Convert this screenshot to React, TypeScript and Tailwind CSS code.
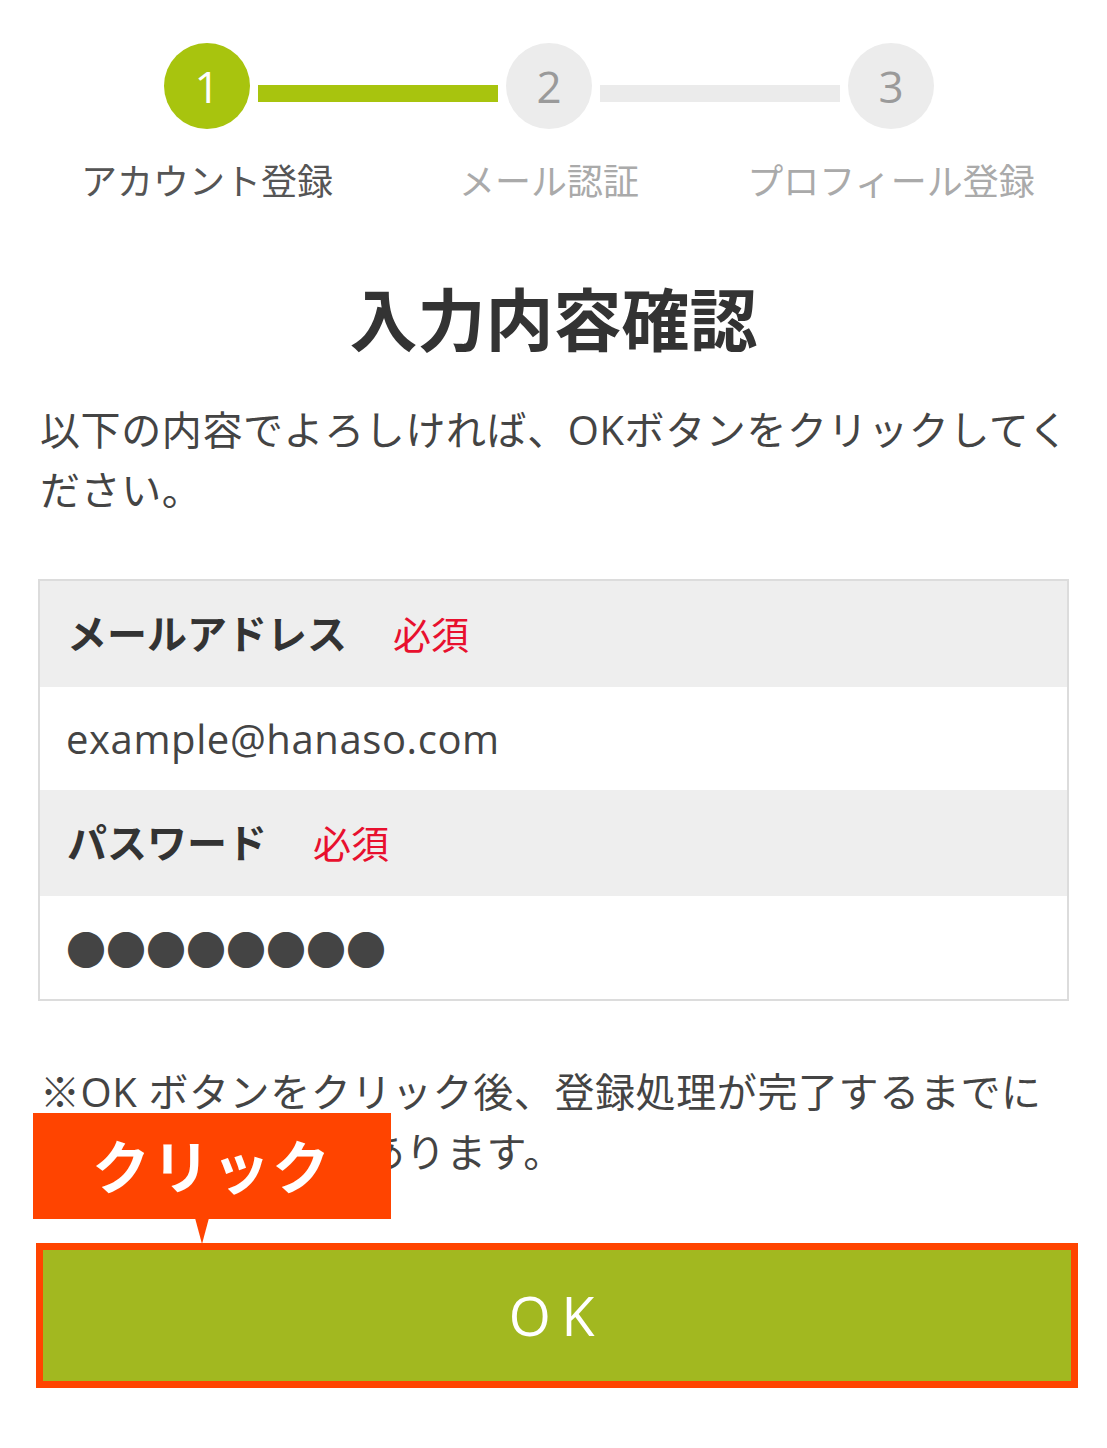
const jp = "font-['Open_Sans','Noto_Sans_CJK_JP',sans-serif]";

function Step({ n, active }: { n: number; active?: boolean }) {
  return (
    <div
      className={
        "flex h-[86px] w-[86px] shrink-0 items-center justify-center rounded-full text-[44px] leading-none " +
        (active ? "bg-[#a8c40e] text-white" : "bg-[#ececec] text-[#9a9a9a]")
      }
    >
      {n}
    </div>
  );
}

function Row({ label, value, dots }: { label: string; value: string; dots?: boolean }) {
  return (
    <>
      <div className="flex h-[106px] items-center bg-[#eeeeee] px-[27px]">
        <span className="text-[40px] font-bold text-[#333]">{label}</span>
        <span className="ml-[46px] text-[38px] text-[#e8102e]">必須</span>
      </div>
      <div className="flex h-[103px] items-center bg-white px-[26px]">
        {dots ? (
          <span className="font-['Noto_Sans_CJK_JP',sans-serif] text-[40px] leading-none text-[#444]">
            {value}
          </span>
        ) : (
          <span className="font-['Open_Sans',sans-serif] text-[40px] tracking-[0.6px] text-[#444]">
            {value}
          </span>
        )}
      </div>
    </>
  );
}

export default function App() {
  return (
    <div className={"min-h-[1448px] w-[1107px] bg-white " + jp}>
      {/* stepper */}
      <div className="flex items-center pl-[164px] pt-[43px]">
        <Step n={1} active />
        <div className="mx-[8px] mt-[14px] h-[17px] w-[240px] bg-[#a8c40e]" />
        <Step n={2} />
        <div className="mx-[8px] mt-[14px] h-[17px] w-[240px] bg-[#ebebeb]" />
        <Step n={3} />
      </div>
      <div className="mt-[26px] grid grid-cols-[342px_342px_342px] pl-[36px] text-[36px] leading-[54px]">
        <div className="text-center text-[#555]">アカウント登録</div>
        <div className="text-center text-[#aaa]">メール認証</div>
        <div className="text-center text-[#aaa]">プロフィール登録</div>
      </div>

      <h1 className="mt-[70px] text-center text-[68px] font-bold leading-[82px] text-[#333]">
        入力内容確認
      </h1>

      <p className="mt-[39px] px-[40px] text-[40px] leading-[60px] tracking-[0.6px] text-[#444]">
        <span className="block whitespace-nowrap">
          以下の内容でよろしければ、OKボタンをクリックしてく
        </span>
        <span className="block">ださい。</span>
      </p>

      <div className="mx-[38px] mt-[59px] border-2 border-[#dcdcdc]">
        <Row label="メールアドレス" value="example@hanaso.com" />
        <Row label="パスワード" value="●●●●●●●●" dots />
      </div>

      <div className="relative">
        <p className="mt-[61px] px-[40px] text-[40px] leading-[60px] tracking-[0.6px] text-[#444]">
          <span className="block whitespace-nowrap">
            ※OK ボタンをクリック後、登録処理が完了するまでに
          </span>
          <span className="block">数分かかる場合があります。</span>
        </p>

        <div className="ml-[36px] mr-[29px] mt-[61px] border-[7px] border-[#ff4400]">
          <button className="flex h-[131px] w-full items-center justify-center bg-[#a2b820] text-[54px] tracking-[0.2em] text-white">
            OK
          </button>
        </div>

        {/* annotation callout */}
        <div className="absolute left-[33px] top-[51px] flex h-[106px] w-[358px] items-center justify-center bg-[#ff4400]">
          <span className="text-[58px] font-bold tracking-[2px] text-white">クリック</span>
          <div className="absolute left-[162px] top-[105px] h-0 w-0 border-x-[7px] border-t-[26px] border-x-transparent border-t-[#ff4400]" />
        </div>
      </div>
    </div>
  );
}
